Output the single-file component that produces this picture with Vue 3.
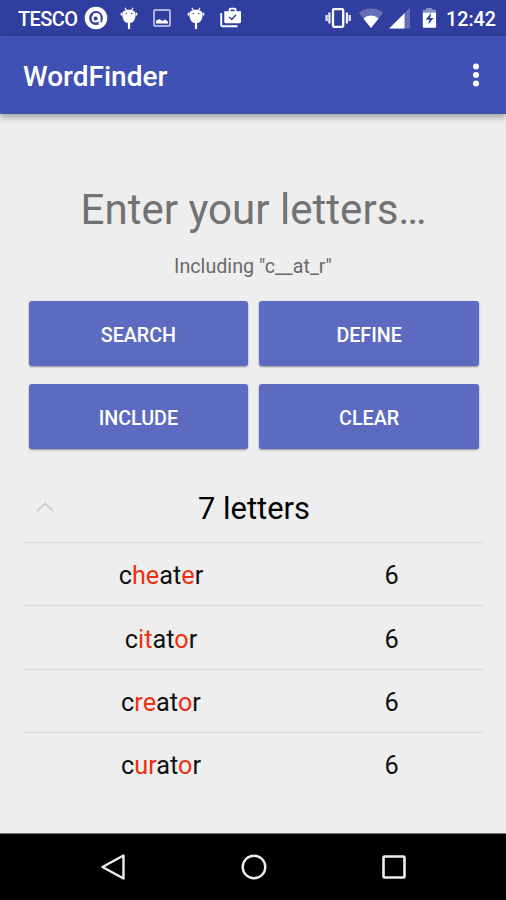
<script setup>
const actions = ['SEARCH', 'DEFINE', 'INCLUDE', 'CLEAR']
const pattern = 'c__at_r'
const results = [
  { word: 'cheater', score: 6 },
  { word: 'citator', score: 6 },
  { word: 'creator', score: 6 },
  { word: 'curator', score: 6 },
]
const isFilled = (i) => pattern[i] === '_'
</script>

<template>
  <div class="screen">
    <header class="status">
      <div class="group">
        <span class="carrier">TESCO</span>
        <svg width="24" height="36" viewBox="0 0 24 36">
          <circle cx="12" cy="18" r="11.3" fill="#fff" />
          <circle cx="12" cy="18" r="6.9" fill="#303f9f" />
          <circle cx="11.6" cy="18.4" r="3" fill="none" stroke="#fff" stroke-width="2" />
          <path d="M9 14.600Q15.600 12.800 15.600 17V24" fill="none" stroke="#fff" stroke-width="2" />
        </svg>
        <svg class="bug" width="18" height="36" viewBox="0 0 18 36">
          <path d="M4.900 7.800l2 3.200M13.100 7.800l-2 3.200" stroke="#fff" stroke-width="1.200" />
          <path d="M2.300 14.200C2.300 11.300 5 9.700 9 9.700s6.700 1.600 6.700 4.500c0 4.800-2.400 8.600-5 8.600H10.100v6.200H7.900v-6.200h-.6C4.700 22.800 2.300 19 2.300 14.200z" fill="#fff" />
          <path d="M1.400 12.800v2.600M16.600 12.800v2.600" stroke="#fff" stroke-width="1.400" />
          <path d="M5.500 13.600h1.600M10.900 13.600h1.600" stroke="#303f9f" stroke-width="1" />
        </svg>
        <svg class="picture" width="20" height="36" viewBox="0 0 20 36">
          <rect x="2" y="10" width="16" height="16" rx="1" fill="none" stroke="#d4d8ee" stroke-width="1.500" />
          <path d="M4 23.500v-2.800l3.300-1.700 3 1.900 2.800-1.300 2.900 2.100v1.800z" fill="#fff" />
        </svg>
        <svg class="bug second" width="18" height="36" viewBox="0 0 18 36">
          <path d="M4.900 7.800l2 3.200M13.100 7.800l-2 3.200" stroke="#fff" stroke-width="1.200" />
          <path d="M2.300 14.200C2.300 11.300 5 9.700 9 9.700s6.700 1.600 6.700 4.500c0 4.800-2.400 8.600-5 8.600H10.100v6.200H7.900v-6.200h-.6C4.700 22.800 2.300 19 2.300 14.200z" fill="#fff" />
          <path d="M1.400 12.800v2.600M16.600 12.800v2.600" stroke="#fff" stroke-width="1.400" />
          <path d="M5.500 13.600h1.600M10.900 13.600h1.600" stroke="#303f9f" stroke-width="1" />
        </svg>
        <svg class="bag" width="22" height="36" viewBox="0 0 22 36">
          <path d="M1.200 13V25a1.200 1.200 0 0 0 1.200 1.200H17.500" fill="none" stroke="#fff" stroke-width="1.900" />
          <path fill-rule="evenodd" d="M4.300 11.300H8.700V9.400Q8.700 7.700 10.400 7.700h4.400Q16.500 7.700 16.500 9.400v1.900H21v10.500q0 1.500-1.500 1.500H5.800q-1.500 0-1.500-1.500zM10.600 11.300h4V9.600h-4z" fill="#fff" />
          <path d="M9.300 17l2.500 2.500 4.200-4.700" fill="none" stroke="#303f9f" stroke-width="1.400" />
        </svg>
      </div>
      <div class="group">
        <svg width="28" height="36" viewBox="0 0 28 36">
          <rect x="9" y="9.200" width="10.200" height="17.600" rx="1" fill="none" stroke="#fff" stroke-width="2.300" />
          <path d="M5.400 12.500v11M22.900 12.500v11" stroke="#e8eaf6" stroke-width="2.300" />
          <path d="M2.600 15v6M25.700 15v6" stroke="#e8eaf6" stroke-width="2.300" />
        </svg>
        <svg class="wifi" width="26" height="36" viewBox="0 0 26 36">
          <path d="M13 28L.8 12.700Q6 8.400 13 8.400t12.200 4.300z" fill="#6570b8" />
          <path d="M13 28L5.400 18.400Q8.500 15.600 13 15.600t7.600 2.800z" fill="#fff" />
        </svg>
        <svg class="signal" width="22" height="36" viewBox="0 0 22 36">
          <path d="M.2 28.400L21 7.800V28.400z" fill="#6570b8" />
          <path d="M.2 28.400L15.500 13.300V28.400z" fill="#fff" />
        </svg>
        <svg class="battery" width="15" height="36" viewBox="0 0 15 36">
          <path d="M.8 12.500V10.700q0-.9.900-.9H4.300V8h6v1.800h2.900q.9 0 .9.900v1.800z" fill="#8790c8" />
          <path d="M.8 12.500h13.300v14.300q0 1-1 1H1.800q-1 0-1-1z" fill="#fff" />
          <path d="M9.300 12.800L3.600 19.700h3.800l-1.200 4.800L11.600 18H8.200z" fill="#303f9f" />
        </svg>
        <span class="time">12:42</span>
      </div>
    </header>

    <div class="appbar">
      <h1>WordFinder</h1>
      <svg width="10" height="30" viewBox="0 0 10 30" fill="#fff">
        <circle cx="5" cy="6.600" r="3" />
        <circle cx="5" cy="15" r="3" />
        <circle cx="5" cy="23.400" r="3" />
      </svg>
    </div>

    <main>
      <div class="hint">Enter your letters…</div>
      <div class="including">Including "{{ pattern }}"</div>
      <div class="actions">
        <button v-for="a in actions" :key="a">{{ a }}</button>
      </div>
      <section class="results">
        <div class="heading">
          <svg width="18" height="12" viewBox="0 0 18 12">
            <path d="M1 10l8-7.500 8 7.500" fill="none" stroke="#cdcdcd" stroke-width="1.800" />
          </svg>
          <span>7 letters</span>
        </div>
        <div v-for="r in results" :key="r.word" class="row">
          <span class="word"><span v-for="(ch, i) in r.word" :key="i" :class="{ filled: isFilled(i) }">{{ ch }}</span></span>
          <span class="score">{{ r.score }}</span>
        </div>
      </section>
    </main>

    <nav>
      <svg width="26" height="28" viewBox="0 0 26 28">
        <path d="M2.500 14L23.500 2.500v23z" fill="none" stroke="#eee" stroke-width="2.400" stroke-linejoin="round" />
      </svg>
      <svg width="26" height="28" viewBox="0 0 26 28">
        <circle cx="13" cy="14" r="11.300" fill="none" stroke="#eee" stroke-width="2.400" />
      </svg>
      <svg width="26" height="28" viewBox="0 0 26 28">
        <rect x="2.500" y="3.500" width="21" height="21" rx="1" fill="none" stroke="#eee" stroke-width="2.600" />
      </svg>
    </nav>
  </div>
</template>

<style>
body {
  margin: 0;
}
</style>

<style scoped>
.screen {
  width: 506px;
  height: 900px;
  display: flex;
  flex-direction: column;
  background: #eee;
  font-family: Roboto, sans-serif;
  color: #111;
  overflow: hidden;
}
svg {
  display: block;
  flex: none;
}
.status {
  height: 36px;
  flex: none;
  display: flex;
  justify-content: space-between;
  padding: 0 11px 0 18px;
  background: #303f9f;
  color: #fff;
}
.group {
  display: flex;
  align-items: center;
}
.carrier {
  width: 66px;
  font-size: 20px;
  font-weight: 500;
  line-height: 36px;
  padding-top: 2px;
  letter-spacing: -0.6px;
}
.bug {
  margin-left: 12px;
}
.picture {
  margin-left: 14px;
}
.bug.second {
  margin-left: 15px;
}
.bag {
  margin-left: 15px;
}
.wifi {
  margin-left: 6px;
}
.signal {
  margin-left: 5px;
}
.battery {
  margin-left: 11px;
}
.time {
  width: 49px;
  margin-left: 9px;
  font-size: 19.7px;
  font-weight: 500;
  line-height: 36px;
  padding-top: 3px;
  white-space: nowrap;
}
.appbar {
  height: 78px;
  flex: none;
  display: flex;
  align-items: center;
  justify-content: space-between;
  padding: 0 25px 0 23px;
  background: #3f51b5;
  box-shadow: 0 3px 7px rgba(0, 0, 0, 0.35);
  color: #fff;
}
h1 {
  margin: 3px 0 0;
  font-size: 28px;
  line-height: 34px;
  font-weight: 500;
}
main {
  flex: 1;
  display: flex;
  flex-direction: column;
}
.hint {
  margin-top: 71px;
  font-size: 42.1px;
  line-height: 50px;
  text-align: center;
  text-indent: 1px;
  color: #727272;
}
.including {
  margin-top: 20px;
  font-size: 19.7px;
  line-height: 24px;
  text-align: center;
  color: #6a6a6a;
}
.actions {
  display: grid;
  grid-template-columns: 1fr 1fr;
  gap: 18px 11px;
  padding: 0 27px 0 28.5px;
  margin-top: 22px;
}
button {
  height: 65px;
  border: 0;
  border-radius: 3px;
  background: #5c6bc0;
  color: #fff;
  font: 500 19.7px/65px Roboto, sans-serif;
  padding: 2px 0 0;
  box-shadow: 0 1px 2px rgba(0, 0, 0, 0.4);
}
.results {
  margin: 27px 22px 0 24px;
}
.heading {
  height: 66px;
  box-sizing: border-box;
  padding-bottom: 2px;
  display: grid;
  grid-template-columns: 48px 1fr 48px;
  align-items: center;
  text-align: center;
  font-size: 30.9px;
  color: #000;
}
.heading svg {
  margin: -3px 0 0 12px;
}
.row {
  height: 59.4px;
  padding-top: 3px;
  border-top: 1px solid #dadada;
  display: grid;
  grid-template-columns: 274px 187px;
  align-items: center;
  text-align: center;
  font-size: 25.3px;
}
.filled {
  color: #f0300f;
}
nav {
  height: 67px;
  box-sizing: border-box;
  flex: none;
  display: flex;
  align-items: center;
  justify-content: space-between;
  padding: 0 99px 0 100px;
  background: #000;
  border-top: 1px solid #777;
}
</style>
